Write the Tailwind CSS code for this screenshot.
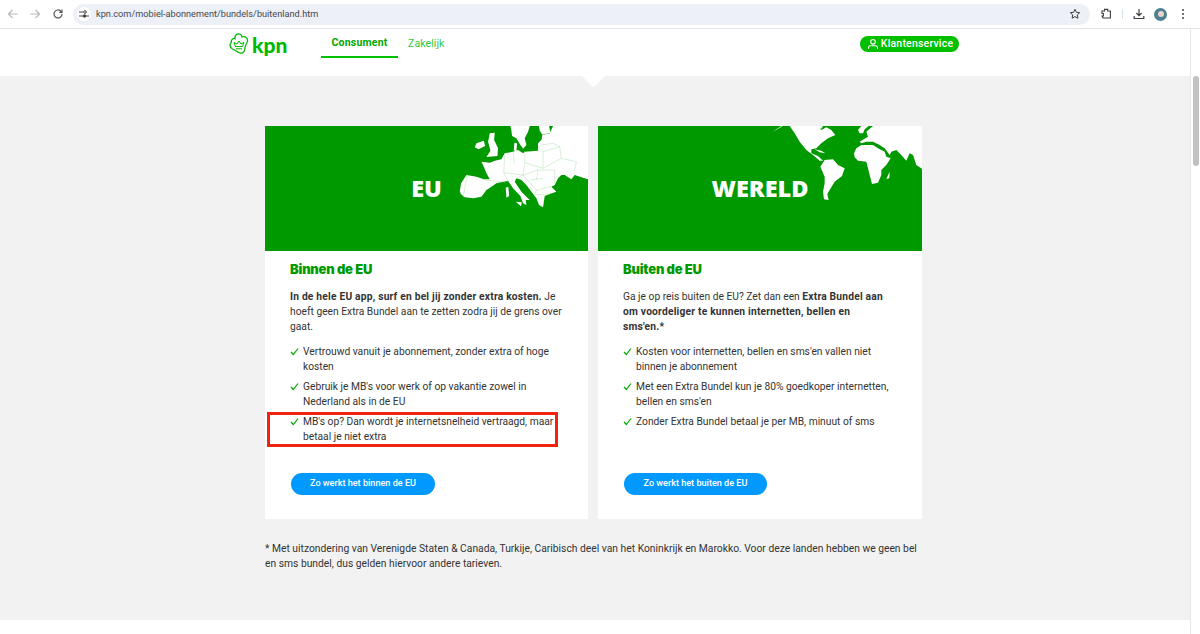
<!DOCTYPE html>
<html lang="nl">
<head>
  <meta charset="UTF-8" />
  <meta name="viewport" content="width=device-width, initial-scale=1.0" />
  <title>KPN - Buitenland</title>
  <script src="https://cdn.jsdelivr.net/npm/@tailwindcss/browser@4"></script>
</head>
<body class="h-[634px] overflow-hidden bg-white font-['Roboto',sans-serif] text-[#333]">
  <!-- Browser balk -->
  <div class="h-[29px] flex items-center border-b border-[#e3e3e6] bg-white">
    <div class="w-[72px] flex items-center pl-[7px] gap-[10px]">
      <svg class="w-[12px] h-[12px]" viewBox="0 0 12 12" fill="none" stroke="#b5b7bb" stroke-width="1.2"><path d="M10.5 6H1.5M5.5 2L1.500 6l4 4"/></svg>
      <svg class="w-[12px] h-[12px]" viewBox="0 0 12 12" fill="none" stroke="#b5b7bb" stroke-width="1.2"><path d="M1.5 6h9M6.5 2l4 4-4 4"/></svg>
      <svg class="w-[12px] h-[12px] ml-[1px]" viewBox="0 0 12 12" fill="none" stroke="#55585c" stroke-width="1.2"><path d="M10 6a4 4 0 1 1-1.2-2.9L10 4.3M10 1.5v2.9H7.2"/></svg>
    </div>
    <div class="w-[1017px] h-[21px] ml-[1px] rounded-full bg-[#edf0f7] flex items-center pl-[4px]">
      <div class="w-[14px] h-[14px] rounded-full bg-white flex items-center justify-center">
        <svg class="w-[10px] h-[10px]" viewBox="0 0 10 10" fill="none" stroke="#444" stroke-width="1"><path d="M0 3h4M7 7h3M0 7h4"/><circle cx="6" cy="3" r="1.3"/><circle cx="5.5" cy="7" r="1.3" fill="#444"/></svg>
      </div>
      <span class="ml-[5px] text-[9.2px] text-[#45484d] flex-1">kpn.com/mobiel-abonnement/bundels/buitenland.htm</span>
      <svg class="w-[12px] h-[12px] mr-[9px]" viewBox="0 0 12 12" fill="none" stroke="#3c3f43" stroke-width="1"><path d="M6 1.3l1.400 3 3.300.4-2.400 2.200.6 3.300L6 8.600l-2.900 1.600.6-3.300L1.300 4.700l3.300-.4z"/></svg>
    </div>
    <div class="flex items-center flex-1 pl-[10px]">
      <svg class="w-[12px] h-[12px]" viewBox="0 0 12 12" fill="none" stroke="#3c3f43" stroke-width="1.1"><path d="M2 3h2.500V1.400h3.200V3h2.700v7H3L2 8h1.400V5.500H2z"/></svg>
      <div class="w-px h-[10px] bg-[#d3e0f2] ml-[10px]"></div>
      <svg class="w-[12px] h-[12px] ml-[10px]" viewBox="0 0 12 12" fill="none" stroke="#3c3f43" stroke-width="1.2"><path d="M6 1v6.500M3.400 5L6 7.600 8.600 5M1.200 8v2.500h9.600V8"/></svg>
      <div class="w-[13px] h-[13px] ml-[9px] rounded-full bg-[#4d7f92] overflow-hidden flex justify-center">
        <div class="w-[6px] h-[6px] mt-[3px] rounded-full bg-[#e8d4c8]"></div>
      </div>
      <div class="ml-[15px] flex flex-col gap-[2px]">
        <div class="w-[2px] h-[2px] rounded-full bg-[#444]"></div>
        <div class="w-[2px] h-[2px] rounded-full bg-[#444]"></div>
        <div class="w-[2px] h-[2px] rounded-full bg-[#444]"></div>
      </div>
    </div>
  </div>

  <div class="flex h-[605px]">
    <div class="w-[1190px] flex flex-col">
      <!-- Navigatie -->
      <header class="relative h-[47px] bg-white flex items-start pl-[229px] pr-[231px] shrink-0">
        <a class="flex items-center h-[26px] mt-[2px] w-[92px]">
          <svg class="w-[20px] h-[22px]" viewBox="0 0 20 22" fill="none" stroke="#00b900" stroke-width="1.300">
            <path d="M7 2C9 0 13 1 13 4c3-1 6 1 5.500 4-.5 3-2.500 4-2.500 7 0 3-2 6-5 5-3-1-5-3-7.500-4C1 15 0 11 2.500 9.500 1.500 7 4 5 6 5.500 5.500 4 6 3 7 2z"/>
            <path d="M6.500 13.500L5 9.500l3 1.500 2-3 2 3 3-1.500-1.500 4zM7 15.800h6" stroke-width="1"/>
          </svg>
          <span class="ml-[3px] text-[21px] leading-none font-black text-[#00b900] font-['Lato',sans-serif]">kpn</span>
        </a>
        <a class="h-[29px] w-[77px] flex items-center justify-center pt-[1px] border-b-2 border-[#00c000] text-[10.5px] font-bold tracking-[0.2px] text-[#00a800]">Consument</a>
        <a class="ml-[10px] h-[29px] flex items-center text-[10.5px] tracking-[0.1px] text-[#2ec83c]">Zakelijk</a>
        <a class="ml-auto mt-[7px] h-[16px] w-[99px] rounded-full bg-[#00c000] flex items-center justify-center gap-[2px] pl-[1px] text-[10.5px] font-medium tracking-[0.2px] text-white">
          <svg class="w-[12px] h-[12px]" viewBox="0 0 12 12" fill="none" stroke="white" stroke-width="1.100"><circle cx="6" cy="3.800" r="2.300"/><path d="M1.500 11V9.500c0-1 1-1.800 2-1.800h5c1 0 2 .8 2 1.800V11"/></svg>
          Klantenservice
        </a>
        <!-- pijltje onder de nav -->
        <div class="absolute left-[585px] top-[38px] w-[17px] h-[17px] rotate-45 bg-white"></div>
      </header>

      <!-- Inhoud -->
      <main class="flex-1 bg-[#f2f2f2] pt-[50px]">
        <div class="ml-[265px] w-[657px] grid grid-cols-[323px_324px] gap-[10px]">
          <section class="relative h-[393px] bg-white">
            <div class="relative h-[125px] bg-[#009900] flex items-center justify-center overflow-hidden">
              <svg class="absolute inset-0 w-full h-full" viewBox="15 18 970 375" preserveAspectRatio="none">
                <g fill="#fff" stroke="none">
                  <polygon points="650,70 672,62 676,78 656,88 645,82"/>
                  <polygon points="690,40 705,38 703,60 715,85 713,108 680,111 692,92 685,65"/>
                  <polygon points="752,18 810,18 805,35 795,55 800,75 790,86 780,72 770,55 757,48 755,32"/>
                  <polygon points="838,18 868,18 872,38 848,44 840,32"/>
                  <polygon points="764,68 772,70 770,95 762,91"/>
                  <polygon points="738,203 746,200 748,228 740,233"/>
                  <polygon points="768,245 786,247 784,259"/>
                  <polygon points="600,213 604,190 620,165 650,170 672,178 690,178 680,160 672,140 665,125 690,128 705,122 725,118 735,100 760,95 775,90 790,100 795,95 835,92 835,70 845,60 848,45 870,40 880,18 985,18 985,178 965,172 945,165 935,178 915,165 905,165 895,175 885,195 875,200 890,215 870,222 855,228 850,262 838,255 830,235 815,215 800,195 785,180 770,175 765,185 785,215 810,240 798,240 800,255 790,250 782,228 760,205 745,183 730,185 710,190 695,200 680,210 665,230 640,235 615,232 603,222"/>
                </g>
                <path fill="none" stroke="#b5e3b5" stroke-width="1.600" d="M622 166L610 231M676 180L735 186M735 100L732 158 745 183M732 158L790 165 770 175M795 95L795 128 850 145 850 95M795 128L790 165 835 150 885 150 885 190M850 95L900 80 905 115 950 125 945 150M850 145L905 115M790 165L830 210 875 200M830 210L825 225 870 222M835 92L845 75 880 70 900 80M760 95L765 130M810 180L850 175M835 150L830 180"/>
              </svg>
              <span class="relative text-[23.5px] font-extrabold text-white font-['Open_Sans',sans-serif] mt-[1px]">EU</span>
            </div>
            <div class="pl-[25px] pr-[22px]">
              <h2 class="mt-[10px] text-[13px] leading-[16px] font-black text-[#009900] font-['Inter',sans-serif] tracking-[-0.2px]">Binnen de EU</h2>
              <p class="mt-[12px] text-[10.25px] leading-[15px]"><strong class="font-bold tracking-[0.2px]">In de hele EU app, surf en bel jij zonder extra kosten.</strong> Je hoeft geen Extra Bundel aan te zetten zodra jij de grens over gaat.</p>
              <ul class="mt-[10px] text-[10.25px] leading-[15px] flex flex-col gap-[5px]">
                <li class="flex"><svg class="w-[9px] h-[9px] mt-[3px] mr-[4px] shrink-0" viewBox="0 0 9 9" fill="none" stroke="#00a800" stroke-width="1.200"><path d="M1 5l2.300 2.500L8 1.500"/></svg><span>Vertrouwd vanuit je abonnement, zonder extra of hoge kosten</span></li>
                <li class="flex"><svg class="w-[9px] h-[9px] mt-[3px] mr-[4px] shrink-0" viewBox="0 0 9 9" fill="none" stroke="#00a800" stroke-width="1.200"><path d="M1 5l2.300 2.500L8 1.500"/></svg><span>Gebruik je MB's voor werk of op vakantie zowel in Nederland als in de EU</span></li>
                <li class="flex"><svg class="w-[9px] h-[9px] mt-[3px] mr-[4px] shrink-0" viewBox="0 0 9 9" fill="none" stroke="#00a800" stroke-width="1.200"><path d="M1 5l2.300 2.500L8 1.500"/></svg><span>MB's op? Dan wordt je internetsnelheid vertraagd, maar betaal je niet extra</span></li>
              </ul>
            </div>
            <a class="absolute left-[26px] top-[347px] w-[144px] h-[22px] rounded-full bg-[#0099ff] flex items-center justify-center text-[9.1px] font-medium text-white">Zo werkt het binnen de EU</a>
            <div class="absolute left-[2px] top-[286px] w-[291px] h-[35px] border-[3px] border-[#f0240c]"></div>
          </section>

          <section class="relative h-[393px] bg-white">
            <div class="relative h-[125px] bg-[#009900] flex items-center justify-center overflow-hidden">
              <svg class="absolute inset-0 w-full h-full" viewBox="10 18 972 375" preserveAspectRatio="none" fill="#fff">
                <polygon points="533,36 560,18 564,18 548,28"/>
                <polygon points="585,18 600,40 615,65 635,90 655,105 675,122 685,122 670,108 650,100 650,88 665,85 680,70 700,55 722,45 710,30 695,22 680,30 668,18"/>
                <polygon points="655,18 685,18 680,26 668,26"/>
                <polygon points="660,88 680,92 692,100 675,97"/>
                <polygon points="677,140 690,120 715,118 730,135 750,145 742,168 720,185 708,205 698,222 702,240 688,238 685,215 690,190 690,170"/>
                <polygon points="790,30 800,18 822,18 810,28 805,40 795,40"/>
                <polygon points="795,65 820,50 815,35 835,18 985,18 985,148 965,135 955,105 945,100 935,122 920,105 905,90 890,95 885,105 870,85 855,75 835,65 815,65 800,70"/>
                <polygon points="778,100 785,85 800,75 835,75 850,85 870,95 875,110 888,115 875,135 860,150 860,165 850,188 832,192 825,165 820,145 815,125 790,122 780,112"/>
                <polygon points="875,177 885,155 884,175"/>
              </svg>
              <span class="relative text-[23.5px] font-extrabold text-white font-['Open_Sans',sans-serif] mt-[1px]">WERELD</span>
            </div>
            <div class="pl-[25px] pr-[22px]">
              <h2 class="mt-[10px] text-[13px] leading-[16px] font-black text-[#009900] font-['Inter',sans-serif] tracking-[-0.2px]">Buiten de EU</h2>
              <p class="mt-[12px] text-[10.25px] leading-[15px]">Ga je op reis buiten de EU? Zet dan een <strong class="font-bold tracking-[0.2px]">Extra Bundel aan om voordeliger te kunnen internetten, bellen en<br>sms'en.*</strong></p>
              <ul class="mt-[10px] text-[10.25px] leading-[15px] flex flex-col gap-[5px]">
                <li class="flex"><svg class="w-[9px] h-[9px] mt-[3px] mr-[4px] shrink-0" viewBox="0 0 9 9" fill="none" stroke="#00a800" stroke-width="1.200"><path d="M1 5l2.300 2.500L8 1.500"/></svg><span>Kosten voor internetten, bellen en sms'en vallen niet binnen je abonnement</span></li>
                <li class="flex"><svg class="w-[9px] h-[9px] mt-[3px] mr-[4px] shrink-0" viewBox="0 0 9 9" fill="none" stroke="#00a800" stroke-width="1.200"><path d="M1 5l2.300 2.500L8 1.500"/></svg><span>Met een Extra Bundel kun je 80% goedkoper internetten, bellen en sms'en</span></li>
                <li class="flex"><svg class="w-[9px] h-[9px] mt-[3px] mr-[4px] shrink-0" viewBox="0 0 9 9" fill="none" stroke="#00a800" stroke-width="1.200"><path d="M1 5l2.300 2.500L8 1.500"/></svg><span>Zonder Extra Bundel betaal je per MB, minuut of sms</span></li>
              </ul>
            </div>
            <a class="absolute left-[26px] top-[347px] w-[143px] h-[22px] rounded-full bg-[#0099ff] flex items-center justify-center text-[9.1px] font-medium text-white">Zo werkt het buiten de EU</a>
          </section>
        </div>
        <p class="ml-[265px] mt-[22px] w-[655px] text-[10.3px] leading-[15px]">* Met uitzondering van Verenigde Staten &amp; Canada, Turkije, Caribisch deel van het Koninkrijk en Marokko. Voor deze landen hebben we geen bel en sms bundel, dus gelden hiervoor andere tarieven.</p>
      </main>
      <div class="h-[14px] bg-white shrink-0"></div>
    </div>
    <!-- Scrollbalk -->
    <div class="w-[10px] bg-white border-l border-[#e8e8e8] pt-[47px] pl-[2px]">
      <div class="w-[6px] h-[90px] rounded-full bg-[#c1c1c1]"></div>
    </div>
  </div>
</body>
</html>
